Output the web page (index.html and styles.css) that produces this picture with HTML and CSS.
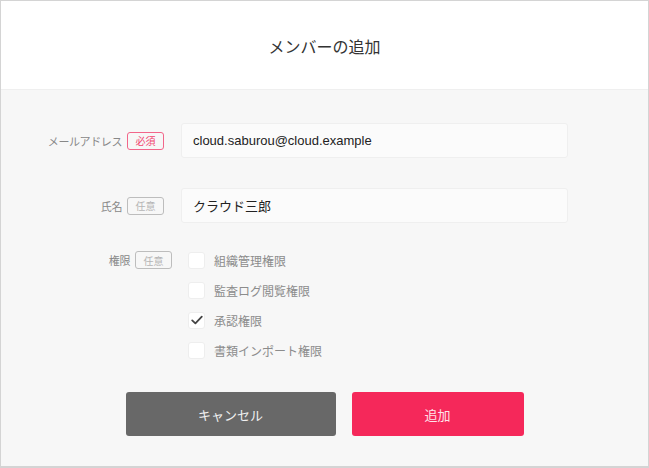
FILE: index.html
```html
<!DOCTYPE html>
<html lang="ja">
<head>
<meta charset="utf-8">
<link rel="stylesheet" href="styles.css">
</head>
<body>
<div class="window">
  <header class="header"><h1 class="title">メンバーの追加</h1></header>
  <main class="body">
    <div class="row">
      <div class="label"><span class="label-text">メールアドレス</span><span class="badge badge-req">必須</span></div>
      <div class="input">cloud.saburou@cloud.example</div>
    </div>
    <div class="row row-name">
      <div class="label"><span class="label-text">氏名</span><span class="badge">任意</span></div>
      <div class="input">クラウド三郎</div>
    </div>
    <div class="row row-perm">
      <div class="label label-perm"><span class="label-text">権限</span><span class="badge">任意</span></div>
      <div class="checks">
        <div class="check"><span class="box"></span><span class="check-text">組織管理権限</span></div>
        <div class="check"><span class="box"></span><span class="check-text">監査ログ閲覧権限</span></div>
        <div class="check"><span class="box"><svg width="14" height="14" viewBox="0 0 14 14"><path d="M2.2 7.4 L5.4 10.4 L11.8 3.6" fill="none" stroke="#444" stroke-width="1.8" stroke-linecap="round" stroke-linejoin="round"/></svg></span><span class="check-text">承認権限</span></div>
        <div class="check"><span class="box"></span><span class="check-text">書類インポート権限</span></div>
      </div>
    </div>
    <div class="actions">
      <button class="btn btn-cancel">キャンセル</button>
      <button class="btn btn-add">追加</button>
    </div>
  </main>
</div>
</body>
</html>
```
FILE: styles.css
```css
* { box-sizing: border-box; }
html, body { margin: 0; padding: 0; }
body {
  font-family: "Liberation Sans", "Noto Sans CJK JP", sans-serif;
  background: #ffffff;
}
.window {
  width: 649px;
  height: 468px;
  border: 1px solid #d4d4d4;
  border-bottom-width: 2px;
  display: flex;
  flex-direction: column;
  background: #f7f7f7;
}
.header {
  height: 89px;
  flex: none;
  background: #ffffff;
  border-bottom: 1px solid #efefef;
  display: flex;
  align-items: center;
  justify-content: center;
}
.title {
  margin: 0;
  font-size: 16px;
  font-weight: normal;
  color: #333333;
  padding-top: 2px;
}
.body {
  flex: 1;
  padding-top: 33px;
}
.row {
  display: flex;
  align-items: center;
  gap: 17px;
}
.row-name { margin-top: 30px; }
.row-perm { margin-top: 22px; align-items: flex-start; gap: 16px; }
.label {
  width: 163px;
  display: flex;
  align-items: center;
  justify-content: flex-end;
  gap: 5px;
}
.label-perm { width: 171px; height: 30px; }
.label-text {
  font-size: 11px;
  letter-spacing: -0.4px;
  color: #888888;
}
.badge {
  width: 37px;
  height: 18px;
  border: 1px solid #bdbdbd;
  border-radius: 3px;
  color: #b5b5b5;
  font-size: 10px;
  display: flex;
  align-items: center;
  justify-content: center;
}
.badge-req {
  border-color: #f2668a;
  color: #f2456f;
}
.input {
  width: 387px;
  height: 35px;
  background: #fbfbfb;
  border: 1px solid #efefef;
  border-radius: 3px;
  padding-left: 11px;
  display: flex;
  align-items: center;
  font-size: 13px;
  color: #222222;
}
.checks {
  display: flex;
  flex-direction: column;
}
.check {
  height: 30px;
  display: flex;
  align-items: center;
}
.box {
  width: 17px;
  height: 17px;
  background: #ffffff;
  border: 1px solid #eeeeee;
  border-radius: 3px;
  display: flex;
  align-items: center;
  justify-content: center;
}
.check-text {
  margin-left: 9px;
  font-size: 12px;
  color: #8c8c8c;
}
.actions {
  margin-top: 27px;
  display: flex;
  justify-content: center;
  gap: 16px;
}
.btn {
  height: 44px;
  border: none;
  border-radius: 3px;
  font-family: inherit;
  font-size: 13px;
  padding: 0;
}
.btn-cancel {
  width: 210px;
  background: #686868;
  color: #f0f0f0;
}
.btn-add {
  width: 172px;
  background: #f5285a;
  color: #ffe4ea;
}
```
